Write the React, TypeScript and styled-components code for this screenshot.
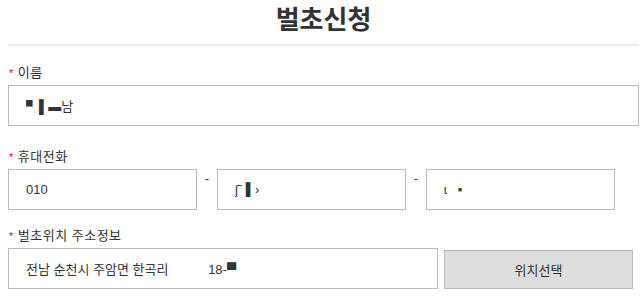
import styled, { createGlobalStyle } from 'styled-components';

const GlobalStyle = createGlobalStyle`
  body {
    margin: 0;
    background: #fff;
    font-family: "Liberation Sans", "Noto Sans CJK KR", sans-serif;
    color: #333;
  }
`;

const Page = styled.main`
  width: 631px;
  padding: 0 0 0 8px;
`;

const Title = styled.h2`
  margin: 0;
  height: 44px;
  line-height: 40px;
  font-size: 26px;
  font-weight: 700;
  text-align: center;
  color: #333;
  border-bottom: 2px solid #eee;
`;

const Field = styled.section<{ $top: number }>`
  margin-top: ${(p) => p.$top}px;
  display: flex;
  flex-direction: column;
  gap: 4px;
`;

const Label = styled.label`
  display: flex;
  align-items: center;
  gap: 4px;
  height: 16px;
  line-height: 16px;
  font-size: 13px;
  letter-spacing: 0.5px;
  color: #333;
  padding-left: 1px;
`;

const Required = styled.span`
  color: #e00;
  font-size: 11px;
`;

const Row = styled.div`
  display: flex;
  align-items: flex-start;
`;

const TextInput = styled.input<{ $width?: string }>`
  box-sizing: border-box;
  width: ${(p) => p.$width ?? '100%'};
  height: 41px;
  margin: 0;
  padding: 0 0 0 17px;
  border: 1px solid #bbb;
  border-radius: 0;
  background: #fff;
  font-family: inherit;
  font-size: 13px;
  color: #333;
  outline: none;
`;

const Dash = styled.span`
  width: 20px;
  text-align: center;
  font-size: 13px;
  line-height: 13px;
  padding-top: 3px;
  color: #333;
`;

const PickButton = styled.button`
  box-sizing: border-box;
  width: 189px;
  height: 39px;
  margin: 2px 0 0 6px;
  border: 1px solid #bbb;
  border-radius: 0;
  background: #ddd;
  font-family: inherit;
  font-size: 13px;
  color: #333;
`;

export default function App() {
  return (
    <>
      <GlobalStyle />
      <Page>
        <Title>벌초신청</Title>

        <Field $top={19}>
          <Label>
            <Required>*</Required>이름
          </Label>
          <TextInput readOnly value="▘▌▬남" />
        </Field>

        <Field $top={23}>
          <Label>
            <Required>*</Required>휴대전화
          </Label>
          <Row>
            <TextInput $width="189px" readOnly value="010" />
            <Dash>-</Dash>
            <TextInput $width="189px" readOnly value="ʃˉ ▌›" />
            <Dash>-</Dash>
            <TextInput $width="189px" readOnly value="ɩ   ▪" />
          </Row>
        </Field>

        <Field $top={18}>
          <Label>
            <Required>*</Required>벌초위치 주소정보
          </Label>
          <Row>
            <TextInput
              $width="430px"
              readOnly
              value="전남 순천시 주암면 한곡리           18-▀"
            />
            <PickButton type="button">위치선택</PickButton>
          </Row>
        </Field>
      </Page>
    </>
  );
}
